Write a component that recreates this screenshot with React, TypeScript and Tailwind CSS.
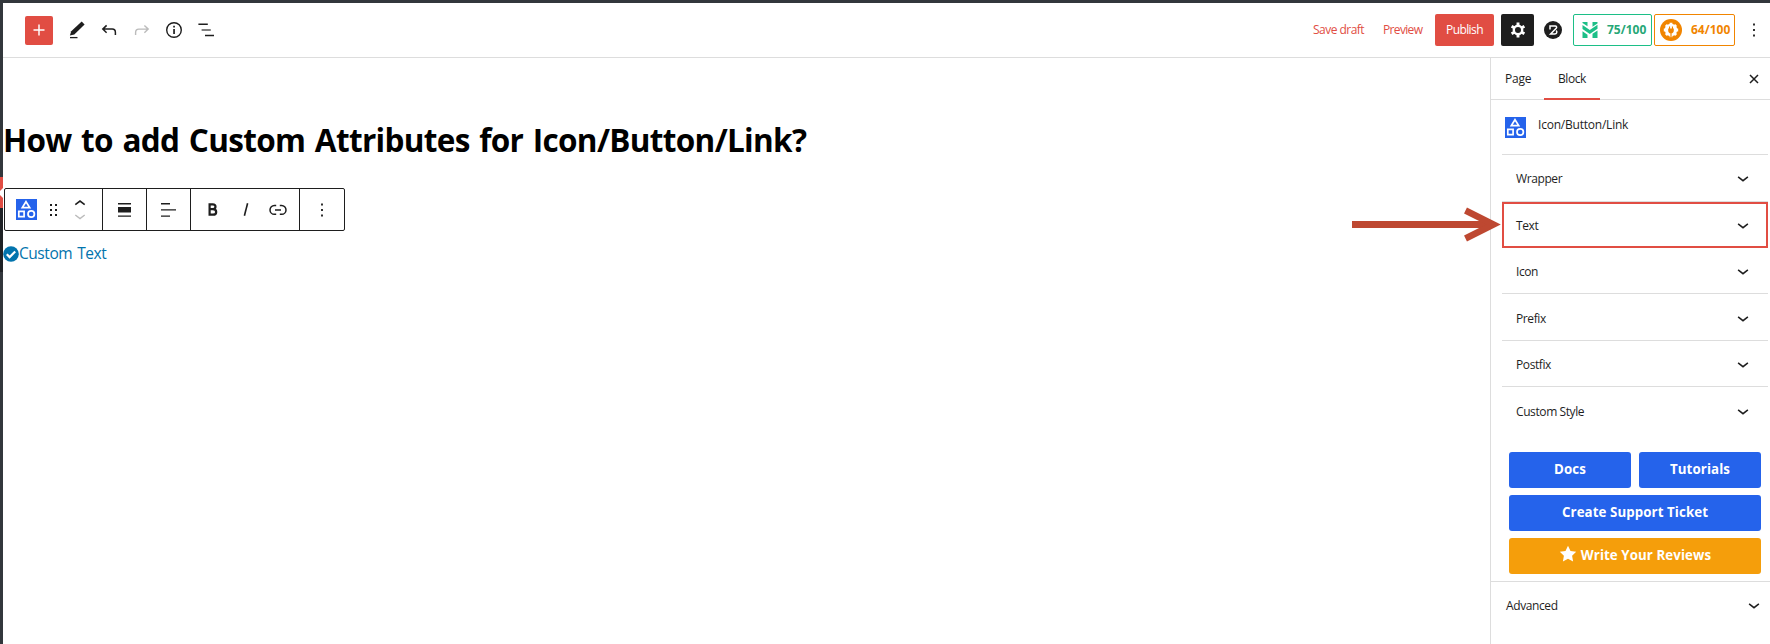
import type { ReactNode } from 'react';

type IconProps = { children: ReactNode; className?: string; size?: number };

function Icon({ children, className = '', size = 24 }: IconProps) {
  return (
    <svg
      viewBox="0 0 24 24"
      width={size}
      height={size}
      fill="currentColor"
      className={`shrink-0 ${className}`}
      aria-hidden="true"
    >
      {children}
    </svg>
  );
}

function ShapesIcon() {
  return (
    <svg viewBox="0 0 21 21" width="21" height="21" className="shrink-0 bg-[#2563eb]" aria-hidden="true">
      <g fill="none" stroke="#fff" strokeWidth="1.7">
        <path d="M10 2.7 13.7 8.6H6.3Z" />
        <path d="M2.8 12.3h5.3v5.3H2.8z" />
        <circle cx="15.2" cy="15" r="3.2" />
      </g>
    </svg>
  );
}

function Chevron() {
  return (
    <svg viewBox="0 0 12 8" width="12" height="8" className="shrink-0" aria-hidden="true">
      <path d="M1.1 1.9 6 5.7l4.9-3.8" fill="none" stroke="#1e1e1e" strokeWidth="1.5" />
    </svg>
  );
}

function DotsIcon() {
  return (
    <Icon size={22}>
      <path d="M13 19h-2v-2h2v2zm0-6h-2v-2h2v2zm0-6h-2V5h2v2z" />
    </Icon>
  );
}

function Header() {
  return (
    <header className="flex h-[55px] shrink-0 items-center border-b border-[#ddd] pl-[22px]">
      <button className="flex h-[29px] w-7 items-center justify-center rounded-[2px] bg-[#e14d43] text-white">
        <Icon size={22}>
          <path d="M18 11.2h-5.2V6h-1.6v5.2H6v1.6h5.2V18h1.6v-5.2H18z" />
        </Icon>
      </button>
      <svg viewBox="0 0 18 18" width="18" height="18" className="ml-4" aria-hidden="true">
        <path d="M12.7.6 2.2 10.2.9 14.4l4.4-1L15.6 3.5z" fill="#1e1e1e" />
        <path d="M1 16.6h7.5" stroke="#1e1e1e" strokeWidth="1.3" />
      </svg>
      <svg viewBox="0 0 16 13" width="16" height="13" className="ml-[14px]" aria-hidden="true">
        <path d="M5.6 1.4 1.8 5.1l3.8 3.7M2 5.1h9.2c2.1 0 3.2 1.2 3.2 3.3v2.7" fill="none" stroke="#1e1e1e" strokeWidth="1.5" />
      </svg>
      <svg viewBox="0 0 16 13" width="16" height="13" className="ml-[17px]" aria-hidden="true">
        <path d="m10.4 1.4 3.8 3.7-3.8 3.7M14 5.1H4.8C2.7 5.1 1.6 6.3 1.6 8.4v2.7" fill="none" stroke="#bbb" strokeWidth="1.4" />
      </svg>
      <svg viewBox="0 0 18 18" width="18" height="18" className="ml-[15px]" aria-hidden="true">
        <circle cx="9" cy="9" r="7.3" fill="none" stroke="#1e1e1e" strokeWidth="1.4" />
        <path d="M8.2 4.7h1.7v1.7H8.2zM8.2 8h1.7v5H8.2z" fill="#1e1e1e" />
      </svg>
      <svg viewBox="0 0 18 16" width="18" height="16" className="ml-[14px]" aria-hidden="true">
        <path d="M1.4 2.2h9.4M8 13.6h9" stroke="#1e1e1e" strokeWidth="1.5" />
        <path d="M4.6 8h9.2" stroke="#555" strokeWidth="1.5" />
      </svg>

      <div className="ml-auto flex items-center text-[12px]">
        <span className="mr-[18px] w-[52px] whitespace-nowrap tracking-[-0.52px] text-[#e14d43]">Save draft</span>
        <span className="w-10 whitespace-nowrap tracking-[-0.66px] text-[#e14d43]">Preview</span>
        <button className="ml-3 flex h-8 w-[59px] items-center justify-center rounded-[2px] bg-[#e14d43] tracking-[-0.6px] text-white">
          Publish
        </button>
        <button className="ml-[7px] flex h-8 w-[33px] items-center justify-center rounded-[2px] bg-[#1e1e1e] text-white">
          <svg viewBox="0 0 16 16" width="16" height="16" aria-hidden="true">
            <circle cx="8" cy="8" r="4.2" fill="none" stroke="currentColor" strokeWidth="2.4" />
            <path
              d="M8 .6v3M8 12.4v3M1.6 4.3l2.6 1.5M11.8 10.2l2.6 1.5M1.6 11.7l2.6-1.5M11.8 5.8l2.6-1.5"
              stroke="currentColor"
              strokeWidth="2.9"
            />
          </svg>
        </button>
        <svg viewBox="0 0 18 18" width="18" height="18" className="ml-[10px]" aria-hidden="true">
          <circle cx="9" cy="9" r="9" fill="#1e1e1e" />
          <path
            d="M6 8.4V5h5.2c1.4 0 1.8 1.3 1 2.3L6.6 13h4.2c2 0 2.6-2 1.4-3.4"
            fill="none"
            stroke="#fff"
            strokeWidth="1.5"
          />
        </svg>
        <div className="ml-[11px] flex h-8 w-[79px] items-center rounded-[2px] border border-[#1cbf87] pl-2 font-bold text-[#27a777]">
          <svg viewBox="0 0 16 16" width="16" height="16" aria-hidden="true">
            <path
              d="M.5 0h5v4.2L.5 1zM10.5 0h5v1.6l-5 3.2zM.5 3 7.8 8 15.5 2.8v4L7.8 12 .5 7zM.5 9.2l5 3.6V16h-5zM10.5 11.8l5-3.2V16h-5z"
              fill="#1cbf87"
            />
          </svg>
          <span className="ml-[9px]">75/100</span>
        </div>
        <div className="ml-[2px] flex h-8 w-[81px] items-center rounded-[2px] border border-[#f18500] pl-[5px] font-bold text-[#f18500]">
          <svg viewBox="0 0 22 22" width="22" height="22" aria-hidden="true">
            <circle cx="11" cy="11" r="11" fill="#f18500" />
            <circle cx="11" cy="11" r="6.2" fill="#fff" />
            <path
              d="M11 3.8v14.4M3.8 11h14.4M5.9 5.9l10.2 10.2M16.1 5.9 5.9 16.1"
              stroke="#fff"
              strokeWidth="2.8"
            />
            <path d="M8.2 9.6h5.6v1.8a2.8 2.8 0 0 1-5.6 0zM9 7.4h1.1v3H9zM11.9 7.4H13v3h-1.1zM10.4 13h1.2v6h-1.2z" fill="#f18500" />
          </svg>
          <span className="ml-[9px]">64/100</span>
        </div>
        <div className="ml-2 mr-[5px] text-[#1e1e1e]">
          <DotsIcon />
        </div>
      </div>
    </header>
  );
}

function BlockToolbar() {
  return (
    <div className="ml-px mt-[27px] flex h-[43px] w-[341px] shrink-0 rounded-[2px] border border-[#1e1e1e] text-[#1e1e1e]">
      <div className="flex w-[98px] items-center border-r border-[#1e1e1e] pl-[11px]">
        <ShapesIcon />
        <svg viewBox="0 0 8 14" width="8" height="14" className="ml-[13px]" aria-hidden="true">
          <path
            d="M0 1h2v2H0zM5 1h2v2H5zM0 6h2v2H0zM5 6h2v2H5zM0 11h2v2H0zM5 11h2v2H5z"
            fill="#1e1e1e"
          />
        </svg>
        <svg viewBox="0 0 12 22" width="12" height="22" className="ml-4" aria-hidden="true">
          <path d="M1.3 5.6 6 2l4.7 3.6" fill="none" stroke="#1e1e1e" strokeWidth="1.6" />
          <path d="M1.3 16 6 19.6 10.7 16" fill="none" stroke="#bbb" strokeWidth="1.4" />
        </svg>
      </div>
      <div className="flex w-11 items-center justify-center border-r border-[#1e1e1e]">
        <svg viewBox="0 0 13 14" width="13" height="14" aria-hidden="true">
          <path d="M0 0h13v1.4H0zM0 4h13v5.6H0zM0 12.4h13v1.4H0z" fill="#1e1e1e" />
        </svg>
      </div>
      <div className="flex w-11 items-center justify-center border-r border-[#1e1e1e]">
        <svg viewBox="0 0 15 14" width="15" height="14" aria-hidden="true">
          <path d="M0 0h9v1.4H0zM0 6.2h15v1.4H0zM0 12.4h9v1.4H0z" fill="#1e1e1e" />
        </svg>
      </div>
      <div className="flex w-[109px] items-center border-r border-[#1e1e1e]">
        <svg viewBox="0 0 11 13" width="11" height="13" className="ml-4" aria-hidden="true">
          <path
            d="M1.5 1.3h4.2c1.9 0 2.8 1 2.8 2.4S7.6 6.2 5.7 6.2H1.5M5.9 6.2c2.3 0 3.3 1.1 3.3 2.7s-1 2.8-3.3 2.8H1.5M2.6 1.3v10.4"
            fill="none"
            stroke="#1e1e1e"
            strokeWidth="2.2"
          />
        </svg>
        <svg viewBox="0 0 6 13" width="6" height="13" className="ml-[25px]" aria-hidden="true">
          <path d="M4.6.3 1.4 12.7" stroke="#1e1e1e" strokeWidth="1.6" />
        </svg>
        <svg viewBox="0 0 18 12" width="18" height="12" className="ml-5" aria-hidden="true">
          <path
            d="M7.2 1.5H5.4a4.3 4.3 0 0 0 0 8.8h1.8M10.8 1.5h1.8a4.3 4.3 0 0 1 0 8.8h-1.8M6 5.9h6"
            fill="none"
            stroke="#1e1e1e"
            strokeWidth="1.5"
          />
        </svg>
      </div>
      <div className="flex flex-1 items-center justify-center">
        <DotsIcon />
      </div>
    </div>
  );
}

function Editor() {
  return (
    <main className="flex min-w-0 flex-1 flex-col">
      <h1 className="mt-[61px] whitespace-nowrap text-[31.5px] font-bold leading-[42px] tracking-[-0.67px] text-black [word-spacing:2px]">
        How to add Custom Attributes for Icon/Button/Link?
      </h1>
      <BlockToolbar />
      <div className="mt-3 flex h-[22px] items-center text-[#0274ad]">
        <svg viewBox="0 0 16 16" width="16" height="16" className="shrink-0" aria-hidden="true">
          <circle cx="8" cy="8" r="7.8" fill="#0274ad" />
          <path d="m3.8 8.2 2.8 2.9 5.6-5.6" fill="none" stroke="#fff" strokeWidth="2.2" />
        </svg>
        <span className="whitespace-nowrap text-[15.5px] tracking-[-0.45px] [word-spacing:1.5px]">Custom Text</span>
      </div>
    </main>
  );
}

function PanelRow({ label, className }: { label: string; className: string }) {
  return (
    <div className={`flex items-center justify-between pl-[14px] pr-[19px] ${className}`}>
      <span>{label}</span>
      <Chevron />
    </div>
  );
}

function Sidebar() {
  return (
    <aside className="flex w-[280px] shrink-0 flex-col border-l border-[#ddd] text-[12px] tracking-[-0.4px] text-[#1e1e1e]">
      <div className="flex h-[42px] items-stretch border-b border-[#ddd]">
        <div className="flex w-[53px] items-center pl-[14px] pt-px tracking-[-0.2px]">Page</div>
        <div className="-mb-px flex w-14 items-center justify-center border-b-2 border-[#e14d43] pt-[2px]">Block</div>
        <svg viewBox="0 0 10 10" width="10" height="10" className="ml-auto mr-[11px] self-center" aria-hidden="true">
          <path d="m1 1 8 8M9 1 1 9" stroke="#1e1e1e" strokeWidth="1.5" />
        </svg>
      </div>

      <div className="ml-[11px] mr-[2px] flex h-[55px] items-center border-b border-[#ddd] pl-[3px]">
        <ShapesIcon />
        <span className="mb-1 ml-3 tracking-[-0.22px]">Icon/Button/Link</span>
      </div>

      <div className="ml-[11px] mr-[2px] flex flex-col">
        <PanelRow label="Wrapper" className="h-[47px] border-b border-[#ddd] pt-[2px]" />
        <div className="flex h-[46px] flex-col border-2 border-[#e14d43]">
          <PanelRow label="Text" className="-mx-[2px] flex-1 pt-px" />
        </div>
        <PanelRow label="Icon" className="h-[46px] border-b border-[#ddd] pt-[3px]" />
        <PanelRow label="Prefix" className="h-[47px] border-b border-[#ddd] pt-[3px]" />
        <PanelRow label="Postfix" className="h-[46px] border-b border-[#ddd] pt-[3px]" />
        <PanelRow label="Custom Style" className="h-[49px]" />
      </div>

      <div className="mt-4 grid grid-cols-2 gap-x-2 gap-y-[7px] pb-[7px] pl-[18px] pr-[9px] text-[13.3px] font-[750] tracking-[0.08px] text-white">
        <button className="h-9 rounded-[3px] bg-[#2563eb]">Docs</button>
        <button className="h-9 rounded-[3px] bg-[#2563eb]">Tutorials</button>
        <button className="col-span-2 h-9 rounded-[3px] bg-[#2563eb]">Create Support Ticket</button>
        <button className="col-span-2 flex h-9 items-center justify-center gap-1 rounded-[3px] bg-[#f59e0b]">
          <svg viewBox="0 0 18 18" width="18" height="18" className="mb-1" aria-hidden="true">
            <path d="m9 .8 2.5 5.1 5.7.8-4.1 4 1 5.7L9 13.7l-5.1 2.7 1-5.7-4.1-4 5.7-.8z" fill="#fff" />
          </svg>
          Write Your Reviews
        </button>
      </div>

      <div className="flex h-[48px] items-center justify-between border-t border-[#ddd] pl-[15px] pr-[10px]">
        <span>Advanced</span>
        <Chevron />
      </div>
    </aside>
  );
}

export default function App() {
  return (
    <div className="flex h-[644px] w-[1770px] overflow-hidden border-t-[3px] border-[#32373c] bg-white font-['Open_Sans','Noto_Sans',sans-serif]">
      <div className="flex w-[3px] shrink-0 flex-col bg-[#32373c]">
        <div className="mt-[174px] flex h-[31px] flex-col justify-center bg-[#e14d43]">
          <svg viewBox="0 0 3 10" width="3" height="10" aria-hidden="true">
            <path d="M3 0v10L0 7V3z" fill="#fff" />
          </svg>
        </div>
        <div className="h-16 bg-[#1f2226]" />
      </div>
      <div className="relative flex min-w-0 flex-1 flex-col">
        <Header />
        <div className="flex min-h-0 flex-1">
          <Editor />
          <Sidebar />
        </div>
        <svg
          viewBox="0 0 150 36"
          width="150"
          height="36"
          className="pointer-events-none absolute left-[1349px] top-[204px]"
          aria-hidden="true"
        >
          <path d="M0 17.5h138" stroke="#be4831" strokeWidth="7" />
          <path d="m113.5 3.5 28 14-28 14" fill="none" stroke="#be4831" strokeWidth="6.5" />
        </svg>
      </div>
    </div>
  );
}
